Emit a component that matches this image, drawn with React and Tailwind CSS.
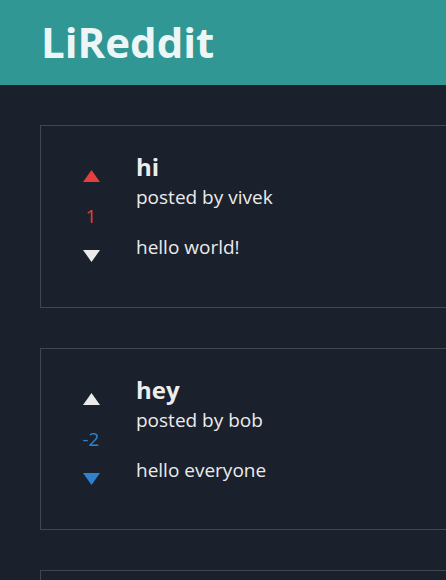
import React from "react";

const posts = [
  { id: 1, title: "hi", author: "vivek", text: "hello world!", points: 1, vote: 1 },
  { id: 2, title: "hey", author: "bob", text: "hello everyone", points: -2, vote: -1 },
];

function UpTriangle({ className }) {
  return (
    <svg width="17" height="12" viewBox="0 0 17 12" className={className}>
      <path d="M8.5 0L17 12H0Z" fill="currentColor" />
    </svg>
  );
}

function DownTriangle({ className }) {
  return (
    <svg width="17" height="12" viewBox="0 0 17 12" className={className}>
      <path d="M0 0H17L8.5 12Z" fill="currentColor" />
    </svg>
  );
}

function PostCard({ post }) {
  const countColor =
    post.vote === 1 ? "text-[#e53e3e]" : post.vote === -1 ? "text-[#3182ce]" : "text-[#ebebeb]";
  return (
    <div className="w-[640px] border border-[#41464f] pt-[25px] pb-[25.5px] px-[25px] flex">
      <div className="flex flex-col items-center justify-center w-[50px] mr-[20px]">
        <button className="w-[50px] h-[50px] flex items-center justify-center">
          <UpTriangle className={post.vote === 1 ? "text-[#e53e3e]" : "text-[#ebebeb]"} />
        </button>
        <span className={`h-[30px] leading-[31px] text-[19px] ${countColor}`}>{post.points}</span>
        <button className="w-[50px] h-[50px] flex items-center justify-center">
          <DownTriangle className={post.vote === -1 ? "text-[#3182ce]" : "text-[#ebebeb]"} />
        </button>
      </div>
      <div className="flex flex-col">
        <h2 className="text-[24px] font-bold leading-[31px] text-[#ededed]">{post.title}</h2>
        <p className="text-[19px] leading-[30px] text-[#ebebeb]">posted by {post.author}</p>
        <p className="mt-[20px] text-[19px] leading-[30px] text-[#ebebeb]">{post.text}</p>
      </div>
    </div>
  );
}

export default function App() {
  return (
    <div
      className="h-screen w-full overflow-hidden bg-[#1a202c]"
      style={{ fontFamily: '"Open Sans", "Noto Sans", sans-serif' }}
    >
      <header className="h-[85px] bg-[#319795] flex items-center px-[41px]">
        <h1 className="text-[42px] font-bold leading-none text-[#edf6f6] -mt-[2px]">LiReddit</h1>
      </header>
      <div className="mt-[40px] ml-[40px] flex flex-col gap-[40px]">
        {posts.map((post) => (
          <PostCard key={post.id} post={post} />
        ))}
        {/* next post, below the fold */}
        <div className="w-[640px] h-[183px] border border-[#41464f]" />
      </div>
    </div>
  );
}
